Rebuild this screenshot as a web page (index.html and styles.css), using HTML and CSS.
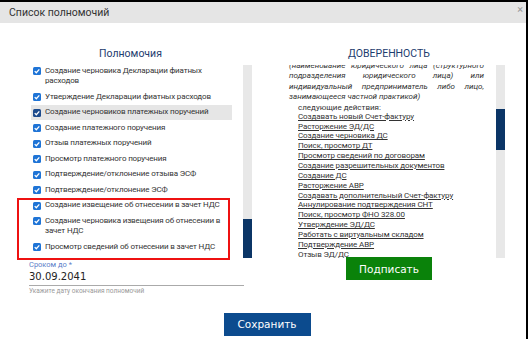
FILE: index.html
```html
<!DOCTYPE html>
<html lang="ru">
<head>
    <meta charset="UTF-8">
    <title>Список полномочий</title>
    <link rel="stylesheet" href="styles.css">
</head>
<body>
    <div class="modal">
        <div class="modal-head">
            <span class="modal-title">Список полномочий</span>
            <span class="close">&times;</span>
        </div>

        <div class="modal-body">
            <div class="col col-left">
                <h2 class="col-title col-title-left">Полномочия</h2>
                <div class="box">
                    <ul class="perms">
                        <li><span class="chk"><svg viewBox="0 0 8 8"><path d="M1.7 4.1 3.3 5.7 6.3 2.4"/></svg></span><span>Создание черновика Декларации фиатных расходов</span></li>
                        <li><span class="chk"><svg viewBox="0 0 8 8"><path d="M1.7 4.1 3.3 5.7 6.3 2.4"/></svg></span><span>Утверждение Декларации фиатных расходов</span></li>
                        <li class="active"><span class="chk"><svg viewBox="0 0 8 8"><path d="M1.7 4.1 3.3 5.7 6.3 2.4"/></svg></span><span>Создание черновиков платежных поручений</span></li>
                        <li><span class="chk"><svg viewBox="0 0 8 8"><path d="M1.7 4.1 3.3 5.7 6.3 2.4"/></svg></span><span>Создание платежного поручения</span></li>
                        <li><span class="chk"><svg viewBox="0 0 8 8"><path d="M1.7 4.1 3.3 5.7 6.3 2.4"/></svg></span><span>Отзыв платежных поручений</span></li>
                        <li><span class="chk"><svg viewBox="0 0 8 8"><path d="M1.7 4.1 3.3 5.7 6.3 2.4"/></svg></span><span>Просмотр платежного поручения</span></li>
                        <li><span class="chk"><svg viewBox="0 0 8 8"><path d="M1.7 4.1 3.3 5.7 6.3 2.4"/></svg></span><span>Подтверждение/отклонение отзыва ЭСФ</span></li>
                        <li><span class="chk"><svg viewBox="0 0 8 8"><path d="M1.7 4.1 3.3 5.7 6.3 2.4"/></svg></span><span>Подтверждение/отклонение ЭСФ</span></li>
                        <li class="mark">
                            <ul class="perms-group">
                                <li><span class="chk"><svg viewBox="0 0 8 8"><path d="M1.7 4.1 3.3 5.7 6.3 2.4"/></svg></span><span>Создание извещение об отнесении в зачет НДС</span></li>
                                <li><span class="chk"><svg viewBox="0 0 8 8"><path d="M1.7 4.1 3.3 5.7 6.3 2.4"/></svg></span><span>Создание черновика извещения об отнесении в зачет НДС</span></li>
                                <li><span class="chk"><svg viewBox="0 0 8 8"><path d="M1.7 4.1 3.3 5.7 6.3 2.4"/></svg></span><span>Просмотр сведений об отнесении в зачет НДС</span></li>
                            </ul>
                        </li>
                    </ul>
                    <div class="track track-end"><div class="thumb"></div></div>
                </div>

                <div class="field">
                    <label class="field-label">Сроком до *</label>
                    <div class="field-value">30.09.2041</div>
                    <div class="field-hint">Укажите дату окончания полномочий</div>
                </div>
            </div>

            <div class="col col-right">
                <h2 class="col-title">ДОВЕРЕННОСТЬ</h2>
                <div class="box">
                    <div class="doc">
                        <div class="doc-para">
                            <span class="jl">(наименование юридического лица (структурного</span>
                            <span class="jl">подразделения юридического лица) или</span>
                            <span class="jl">индивидуальный предприниматель либо лицо,</span>
                            <span>занимающееся частной практикой)</span>
                        </div>
                        <div class="doc-lead">следующие действия:</div>
                        <ul class="doc-list">
                            <li><a href="#">Создавать новый Счет-фактуру</a></li>
                            <li><a href="#">Расторжение ЭД/ДС</a></li>
                            <li><a href="#">Создание черновика ДС</a></li>
                            <li><a href="#">Поиск, просмотр ДТ</a></li>
                            <li><a href="#">Просмотр сведений по договорам</a></li>
                            <li><a href="#">Создание разрешительных документов</a></li>
                            <li><a href="#">Создание ДС</a></li>
                            <li><a href="#">Расторжение АВР</a></li>
                            <li><a href="#">Создавать дополнительный Счет-фактуру</a></li>
                            <li><a href="#">Аннулирование подтверждения СНТ</a></li>
                            <li><a href="#">Поиск, просмотр ФНО 328.00</a></li>
                            <li><a href="#">Утверждение ЭД/ДС</a></li>
                            <li><a href="#">Работать с виртуальным складом</a></li>
                            <li><a href="#">Подтверждение АВР</a></li>
                            <li><a href="#">Отзыв ЭД/ДС</a></li>
                        </ul>
                    </div>
                    <div class="track"><div class="thumb thumb-mid"></div></div>
                </div>
                <button class="btn btn-sign" type="button">Подписать</button>
            </div>
        </div>

        <div class="modal-foot">
            <button class="btn btn-save" type="button">Сохранить</button>
        </div>
    </div>
</body>
</html>
```

FILE: styles.css
```css
* {
    box-sizing: border-box;
}
body {
    margin: 0;
    background: #000;
    font-family: Roboto, "Noto Sans", sans-serif;
    color: #333;
}
.modal {
    margin: 2px 2px 0 0;
    height: 337px;
    background: #fff;
    overflow: hidden;
}
.modal-head {
    height: 21px;
    background: #e5e5e5;
    display: flex;
    justify-content: space-between;
    align-items: center;
    padding: 0 3px 0 9px;
}
.modal-title {
    font-size: 10.5px;
    color: #333;
}
.close {
    align-self: flex-start;
    margin-top: 2px;
    font-size: 11px;
    line-height: 11px;
    color: #999;
}
.modal-body {
    display: flex;
    gap: 21px;
    padding: 23.5px 0 0 29px;
}
.col-left {
    width: 223px;
}
.col-right {
    width: 232px;
}
.col-title {
    margin: 0 0 5.5px;
    font-size: 10.5px;
    font-weight: normal;
    line-height: 13px;
    text-align: center;
    color: #1d3c6e;
}
.col-title-left {
    padding-right: 20px;
}
.box {
    display: flex;
    height: 193px;
}
.track {
    width: 9px;
    background: #e8e8e8;
    display: flex;
    flex-direction: column;
}
.track-end {
    margin-left: 11px;
    justify-content: flex-end;
}
.thumb {
    height: 39px;
    background: #0b3566;
}
.thumb-mid {
    margin-top: 44px;
    height: 41px;
}

/* permissions list */
.perms,
.perms-group {
    list-style: none;
    margin: 0;
    padding: 0;
}
.perms {
    margin: -1.75px 0 0 2px;
    width: 201px;
}
.perms li {
    display: flex;
    align-items: flex-start;
    padding: 2.5px 2px;
    font-size: 8px;
    line-height: 10.5px;
    letter-spacing: -0.15px;
}
.perms li.mark {
    display: block;
    padding: 0;
    position: relative;
}
.perms li.mark::after {
    content: "";
    position: absolute;
    left: -14px;
    right: 2px;
    top: 0;
    bottom: -5px;
    border: 2px solid #ee1111;
}
.perms li.active {
    background: #e6e6e6;
}
.chk {
    flex: none;
    width: 8px;
    height: 8px;
    margin: 1.25px 4px 0 0;
    border-radius: 1.5px;
    background: #1f74d6;
}
.active .chk {
    background: #1c4a8c;
}
.chk svg {
    display: block;
    width: 8px;
    height: 8px;
    fill: none;
    stroke: #fff;
    stroke-width: 1.3;
}

/* date field */
.field {
    margin-top: 2px;
    width: 215px;
}
.field-label {
    display: block;
    font-size: 7.5px;
    line-height: 10px;
    color: #5d7fc9;
}
.field-value {
    font-family: "DejaVu Sans", Verdana, sans-serif;
    font-size: 10px;
    line-height: 13px;
    color: #222;
    padding-bottom: 1.5px;
    border-bottom: 1px solid #aaa;
}
.field-hint {
    margin-top: 1px;
    font-size: 6.5px;
    line-height: 8px;
    color: #999;
}

/* power of attorney text */
.doc {
    width: 223px;
    overflow: hidden;
    padding: 0 12px 0 16px;
    font-size: 8px;
}
.doc-para {
    margin-top: -4.25px;
    font-style: italic;
    line-height: 10.5px;
}
.doc-para span {
    display: block;
}
.doc-para .jl {
    text-align: justify;
    text-align-last: justify;
}
.doc-lead {
    padding-left: 9px;
    line-height: 9px;
}
.doc-list {
    list-style: none;
    margin: 0;
    padding-left: 9px;
    letter-spacing: -0.1px;
}
.doc-list li {
    line-height: 9.85px;
}
.doc-list a {
    color: #333;
    text-decoration: underline;
}

/* buttons */
.btn {
    border: none;
    color: #fff;
    font-family: "DejaVu Sans", Verdana, sans-serif;
    font-size: 10.5px;
    height: 23px;
    padding: 0;
}
.btn-sign {
    display: block;
    width: 86px;
    margin: -1px auto 0;
    background: #0a820a;
    position: relative;
}
.modal-foot {
    display: flex;
    justify-content: center;
    padding: 18px 21px 0 29px;
}
.btn-save {
    width: 87px;
    background: #0c4b8e;
}
```
